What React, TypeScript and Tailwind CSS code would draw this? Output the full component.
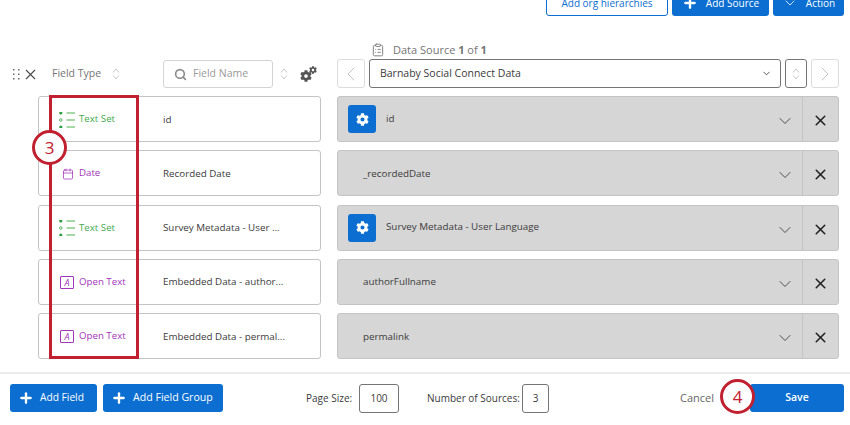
import { ChevronDown, ChevronLeft, ChevronRight, ClipboardList, Calendar, Plus, Search, X } from 'lucide-react'
import { FaCog } from 'react-icons/fa'

type Row = { type: 'set' | 'date' | 'open'; name: string; source: string; gear?: boolean }

const ROWS: Row[] = [
  { type: 'set', name: 'id', source: 'id', gear: true },
  { type: 'date', name: 'Recorded Date', source: '_recordedDate' },
  { type: 'set', name: 'Survey Metadata - User ...', source: 'Survey Metadata - User Language', gear: true },
  { type: 'open', name: 'Embedded Data - author...', source: 'authorFullname' },
  { type: 'open', name: 'Embedded Data - permal...', source: 'permalink' },
]

function SortIcon() {
  return (
    <svg width="8" height="12" viewBox="0 0 8 12" fill="none" stroke="#c9c9c9" strokeWidth="1" className="shrink-0">
      <path d="M1 4.5 4 1l3 3.5M1 7.5 4 11l3-3.5" />
    </svg>
  )
}

function SetIcon() {
  return (
    <svg width="16" height="16" viewBox="0 0 16 16" className="shrink-0">
      <circle cx="1.8" cy="1" r="1.6" fill="#2f9e3f" />
      <circle cx="1.8" cy="8" r="1.3" fill="none" stroke="#2f9e3f" strokeWidth="0.8" />
      <circle cx="1.8" cy="15" r="1.6" fill="#2f9e3f" />
      <path d="M7.5 1H16M7.5 8H16M7.5 15H16" stroke="#4caf50" strokeWidth="1" />
    </svg>
  )
}

function OpenTextIcon() {
  return (
    <span className="w-[14px] h-[13px] shrink-0 border border-[#a235b8] rounded-[1px] flex items-center justify-center text-[9px] italic text-[#a235b8] leading-none">
      A
    </span>
  )
}

function TypeCell({ type }: { type: Row['type'] }) {
  if (type === 'set') {
    return (
      <div className="w-[124px] shrink-0 flex items-center gap-1 pl-[20px] text-[9.7px] text-[#43a94f]">
        <SetIcon />
        <span className="whitespace-nowrap">Text Set</span>
      </div>
    )
  }
  if (type === 'date') {
    return (
      <div className="w-[124px] shrink-0 flex items-center gap-[5px] pl-[23px] text-[9.7px] text-[#a235b8]">
        <Calendar size={12} strokeWidth={1.5} className="shrink-0" />
        <span>Date</span>
      </div>
    )
  }
  return (
    <div className="w-[124px] shrink-0 flex items-center gap-[5px] pl-[21px] text-[9.7px] text-[#a235b8]">
      <OpenTextIcon />
      <span className="whitespace-nowrap">Open Text</span>
    </div>
  )
}

function BlueButton({ label, className }: { label: string; className: string }) {
  return (
    <button className={`h-[28px] shrink-0 rounded-[3px] bg-[#0b6ed0] text-white flex items-center gap-[6px] pl-[8px] ${className}`}>
      <Plus size={16} strokeWidth={3.5} />
      {label}
    </button>
  )
}

export default function App() {
  return (
    <div className="relative w-[850px] h-[425px] overflow-hidden bg-white text-[10px] text-[#3b3b3b] flex flex-col font-['Open_Sans',sans-serif]">
      {/* top toolbar, cut off by the window */}
      <div className="h-[16px] flex items-end justify-end gap-1 pr-[6px] overflow-hidden">
        <button className="h-[26px] w-[122px] shrink-0 rounded-[3px] border border-[#0b6ed0] text-[#0b6ed0]">Add org hierarchies</button>
        <button className="h-[26px] w-[97px] shrink-0 rounded-[3px] bg-[#0b6ed0] text-white flex items-center justify-center gap-2">
          <Plus size={16} strokeWidth={3.5} />
          Add Source
        </button>
        <button className="h-[26px] w-[71px] shrink-0 rounded-[3px] bg-[#0b6ed0] text-white flex items-center justify-center gap-2">
          <ChevronDown size={16} strokeWidth={1.2} />
          Action
        </button>
      </div>

      {/* column headers */}
      <div className="mt-[26px] h-[48px] flex">
        <div className="w-[337px] flex items-end pb-[2px] shrink-0">
          <div className="h-[28px] flex items-center pl-[13px] text-[#757575]">
            <svg width="8" height="11" viewBox="0 0 8 11" className="shrink-0">
              <g fill="#6b6b6b">
                <rect x="0" y="0" width="1.5" height="1.5" />
                <rect x="5" y="0" width="1.5" height="1.5" />
                <rect x="0" y="4.5" width="1.5" height="1.5" />
                <rect x="5" y="4.5" width="1.5" height="1.5" />
                <rect x="0" y="9" width="1.5" height="1.5" />
                <rect x="5" y="9" width="1.5" height="1.5" />
              </g>
            </svg>
            <X size={17} strokeWidth={1.6} className="ml-[1px] text-[#4a4a4a] shrink-0" />
            <span className="ml-[13px] w-[60px] text-[10.5px] whitespace-nowrap">Field Type</span>
            <SortIcon />
            <div className="ml-[43px] w-[110px] h-[28px] shrink-0 rounded-[3px] border border-[#d4d4d4] flex items-center pl-[10px] gap-[6px] text-[#9a9a9a]">
              <Search size={13} strokeWidth={3} className="text-[#8a8a8a]" />
              <span className="whitespace-nowrap text-[10.5px]">Field Name</span>
            </div>
            <span className="ml-[7px]"><SortIcon /></span>
            <span className="ml-[12px] relative w-[17px] h-[16px] text-[#555]">
              <FaCog size={12} className="absolute left-0 bottom-0" />
              <FaCog size={8} className="absolute right-0 top-0" />
            </span>
          </div>
        </div>
        <div className="flex flex-col w-[502px]">
          <div className="h-[16px] pl-[34px] flex items-center gap-[8px] text-[11px] text-[#757575]">
            <ClipboardList size={14} strokeWidth={1.5} />
            <span>
              Data Source <b className="font-bold">1</b> of <b className="font-bold">1</b>
            </span>
          </div>
          <div className="mt-[1px] flex gap-1 h-[29px]">
            <div className="w-[28px] rounded-[3px] border border-[#dcdcdc] flex items-center justify-center text-[#bdbdbd]">
              <ChevronLeft size={24} strokeWidth={0.9} />
            </div>
            <div className="flex-1 rounded-[3px] border border-[#757575] text-[10.5px] flex items-center justify-between pl-[10px] pr-[8px]">
              <span className="pt-[1px]">Barnaby Social Connect Data</span>
              <ChevronDown size={11} strokeWidth={1.8} />
            </div>
            <div className="w-[22px] rounded-[3px] border border-[#757575] flex items-center justify-center">
              <SortIcon />
            </div>
            <div className="w-[28px] rounded-[3px] border border-[#dcdcdc] flex items-center justify-center text-[#bdbdbd]">
              <ChevronRight size={24} strokeWidth={0.9} />
            </div>
          </div>
        </div>
      </div>

      {/* field rows */}
      <div className="mt-[6px] flex flex-col gap-[8.25px]">
        {ROWS.map((row) => (
          <div key={row.source} className="flex gap-[16px] pl-[38px] h-[46px]">
            <div className="w-[283px] rounded-[3px] border border-[#c4c4c4] flex items-center pt-[1px]">
              <TypeCell type={row.type} />
              <span className="whitespace-nowrap text-[9.8px] pt-[1px]">{row.name}</span>
            </div>
            <div className="w-[502px] rounded-[3px] border border-[#c4c4c4] bg-[#d6d6d6] flex items-center text-[9.8px]">
              <div className="flex-1 flex items-center pl-[10px]">
                {row.gear ? (
                  <>
                    <span className="w-[28px] h-[28px] rounded-[3px] bg-[#0b6ed0] flex items-center justify-center text-white">
                      <FaCog size={13} />
                    </span>
                    <span className="ml-[10px]">{row.source}</span>
                  </>
                ) : (
                  <span className="ml-[15px] pt-[2px]">{row.source}</span>
                )}
              </div>
              <ChevronDown size={20} strokeWidth={1} className="mr-[7px] mt-[4px] text-[#333]" />
              <div className="w-[36px] h-full border-l border-[#c4c4c4] pt-[3px] flex items-center justify-center text-[#222]">
                <X size={17} strokeWidth={2.2} />
              </div>
            </div>
          </div>
        ))}
      </div>

      {/* footer */}
      <div className="mt-[13px] border-t-2 border-[#ebebeb] h-[53px] pl-[10px] pr-[6px] pt-[10px] flex items-start">
        <BlueButton label="Add Field" className="w-[87px] text-[10.2px]" />
        <BlueButton label="Add Field Group" className="ml-[6px] w-[120px] text-[10.6px]" />
        <span className="ml-[83px] w-[47px] h-[28px] flex items-center whitespace-nowrap">Page Size:</span>
        <div className="ml-[6px] w-[40px] h-[29px] rounded-[3px] border border-[#757575] flex items-center justify-center">100</div>
        <span className="ml-[28px] w-[89px] h-[28px] flex items-center whitespace-nowrap">Number of Sources:</span>
        <div className="ml-[6px] w-[27px] h-[29px] rounded-[3px] border border-[#757575] flex items-center justify-center">3</div>
        <span className="ml-[131px] w-[33px] h-[28px] flex items-center text-[#666] text-[11px]">Cancel</span>
        <button className="ml-[37px] w-[94px] h-[28px] shrink-0 rounded-[3px] bg-[#0b6ed0] text-white font-semibold text-[10.5px]">Save</button>
      </div>

      {/* red annotations over the screenshot */}
      <div className="absolute left-[49px] top-[95px] w-[90px] h-[264px] border-[3px] border-[#c0202f]" />
      <div className="absolute left-[32px] top-[130px] w-[35px] h-[35px] rounded-full border-[3px] border-[#c0202f] bg-white flex items-center justify-center text-[17px] text-[#c0202f]">3</div>
      <div className="absolute left-[720px] top-[379px] w-[35px] h-[35px] rounded-full border-[3px] border-[#c0202f] bg-white flex items-center justify-center text-[17px] text-[#c0202f]">4</div>
    </div>
  )
}
